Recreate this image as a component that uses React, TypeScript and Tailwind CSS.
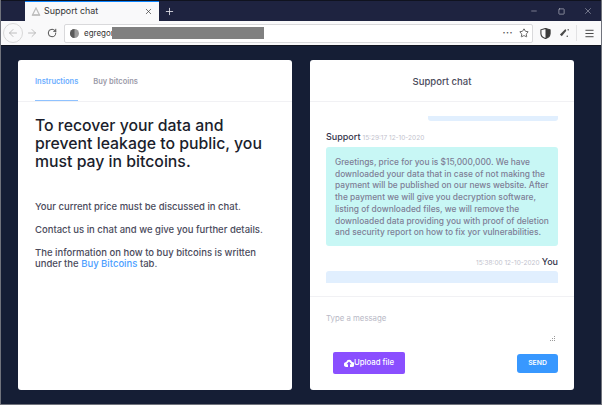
import React from "react";
import { ArrowLeft, ArrowRight, RotateCw, Star, X, Plus, Minus, Square, Menu } from "lucide-react";

const font = { sans: "font-['Inter','Liberation_Sans',sans-serif]" };

const App = () => {
  return (
    <div className={`relative w-[602px] h-[405px] flex flex-col overflow-hidden bg-[#151e35] border-x border-b border-[#70737c] ${font.sans}`}>
      {/* Tab strip */}
      <div className="h-[21px] flex items-end bg-[#1e2340] border-t border-[#10131f] shrink-0">
        <div className="ml-[24px] w-[134px] h-[20px] bg-[#f9f9fa] border-t border-t-[#0a84ff] flex items-center pl-[6px] pr-[6px]">
          <svg width="10" height="9" viewBox="0 0 10 9" className="text-[#bdbdbd] shrink-0" fill="none" stroke="currentColor" strokeWidth="1.2">
            <path d="M5 1 L8.5 8 H1.5 Z" />
            <path d="M1 8 H9" strokeWidth="1.6" />
          </svg>
          <span className="ml-[3px] text-[8.9px] text-[#333] leading-none">Support chat</span>
          <X size={9} className="ml-auto text-[#333]" strokeWidth={1.8} />
        </div>
        <div className="h-[20px] ml-[5px] flex items-center">
          <Plus size={11} className="text-[#e8e8ee]" strokeWidth={1.8} />
        </div>
        <div className="ml-auto h-[20px] flex items-center text-[#c9cbd6]">
          <Minus size={8} strokeWidth={1.6} />
          <Square size={7} className="ml-[20px]" strokeWidth={2} />
          <X size={10} className="ml-[18px] mr-[8px]" strokeWidth={1.2} />
        </div>
      </div>

      {/* Toolbar */}
      <div className="h-[25px] bg-[#f9f9fa] flex items-center shrink-0 border-b border-[#10131f]">
        <div className="ml-[2px] w-[20px] h-[20px] rounded-full border border-[#d8d8d8] flex items-center justify-center">
          <ArrowLeft size={12} className="text-[#b0b0b0]" strokeWidth={1.6} />
        </div>
        <ArrowRight size={12} className="ml-[3px] text-[#b0b0b0]" strokeWidth={1.6} />
        <RotateCw size={10} className="ml-[9px] text-[#333]" strokeWidth={2} />
        <div className="ml-[7px] w-[469px] h-[19px] bg-white border border-[#d9d9db] rounded-[2px] flex items-center pl-[4px] pr-[3px]">
          <svg width="9" height="9" viewBox="0 0 10 10" className="ml-[1px] shrink-0">
            <circle cx="5" cy="5" r="5" fill="#9a9a9a" />
            <path d="M5 0 A5 5 0 0 0 5 10 Z" fill="#5a5a5a" />
          </svg>
          <span className="ml-[5px] text-[8px] text-[#333] leading-none">egregor</span>
          <div className="-ml-[2px] w-[152px] h-[12px] bg-[#808080]" />
          <span className="ml-auto text-[#555] text-[9px] font-bold leading-none tracking-[0.5px] mb-[2px]">···</span>
          <Star size={10} className="ml-[6px] text-[#333]" strokeWidth={1.8} />
        </div>
        <svg width="11" height="11" viewBox="0 0 12 12" className="ml-[7px] shrink-0">
          <path d="M6 .5 L11 2 V6 C11 9 8.5 10.8 6 11.5 C3.5 10.8 1 9 1 6 V2 Z" fill="none" stroke="#3a3a3a" strokeWidth="1.2" />
          <path d="M6 .5 L11 2 V6 C11 9 8.5 10.8 6 11.5 Z" fill="#3a3a3a" />
        </svg>
        <svg width="11" height="11" viewBox="0 0 12 12" className="ml-[8px] shrink-0" fill="#4a4a4a">
          <path d="M7 1 L8 3 L3 9 L1 7 Z" />
          <path d="M9 2 L10 1 L11 2 L10 3 Z" />
          <circle cx="9" cy="9" r="0.8" />
        </svg>
        <div className="ml-[6px] w-px h-[16px] bg-[#e2e2e4]" />
        <Menu size={11} className="ml-[7px] text-[#3a3a3a]" strokeWidth={2} />
      </div>

      {/* Page */}
      <div className="flex gap-[18px] pl-[17px] pt-[14px]">
        {/* Left card */}
        <div className="w-[274px] h-[330px] bg-white rounded-[3px]">
          <div className="h-[42px] border-b border-b-[#f1f1f4] pl-[17px] flex gap-[15px]">
            <div className="h-[41px] border-b border-b-[#8fc2ff] pt-[17px] text-[7.5px] leading-[10px] font-semibold text-[#6aaeff]">Instructions</div>
            <div className="pt-[17px] text-[7.5px] leading-[10px] font-semibold text-[#9b9aa8]">Buy bitcoins</div>
          </div>
          <div className="pl-[17px] pr-[20px]">
            <h1 className="mt-[15px] text-[15.8px] leading-[18px] font-medium text-[#1b1e2c]">
              To recover your data and prevent leakage to public, you must pay in bitcoins.
            </h1>
            <p className="mt-[30px] text-[9.5px] leading-[11px] font-medium text-[#4b4b5c]">Your current price must be discussed in chat.</p>
            <p className="mt-[12px] text-[9.5px] leading-[11px] font-medium text-[#4b4b5c]">Contact us in chat and we give you further details.</p>
            <p className="mt-[12px] pr-[8px] text-[9.5px] leading-[11px] font-medium text-[#4b4b5c]">
              The information on how to buy bitcoins is written under the <a className="text-[#4d9fff]">Buy Bitcoins</a> tab.
            </p>
          </div>
        </div>

        {/* Right card */}
        <div className="w-[264px] h-[330px] bg-white rounded-[3px] flex flex-col">
          <div className="h-[42px] pt-[4px] border-b border-b-[#f1f1f4] flex items-center justify-center text-[9.5px] font-medium text-[#4b4b5c]">
            Support chat
          </div>
          <div className="h-[195px] border-b border-b-[#f1f1f4] pl-[16px] pr-[16px] overflow-hidden">
            <div className="ml-[102px] mt-[14px] h-[5px] bg-[#e1effe] rounded-b-[3px]" />
            <div className="mt-[10px] flex items-baseline gap-[2px]">
              <span className="text-[9px] font-medium leading-[11px] text-[#33334a]">Support</span>
              <span className="text-[6.5px] leading-[11px] text-[#c2c2cd]">15:29:17 12-10-2020</span>
            </div>
            <div className="mt-[3px] h-[99px] bg-[#c8f7f5] rounded-[3px] pl-[9px] pr-[8px] pt-[10px] text-[8.4px] leading-[11.7px] font-medium text-[#7e7e95]">
              Greetings, price for you is $15,000,000. We have downloaded your data that in case of not making the payment will be published on our news website. After the payment we will give you decryption software, listing of downloaded files, we will remove the downloaded data providing you with proof of deletion and security report on how to fix yor vulnerabilities.
            </div>
            <div className="mt-[10px] flex items-baseline justify-end gap-[2px]">
              <span className="text-[6.5px] leading-[11px] text-[#c2c2cd]">15:38:00 12-10-2020</span>
              <span className="text-[9px] font-medium leading-[11px] text-[#33334a]">You</span>
            </div>
            <div className="mt-[2px] h-[12px] bg-[#e1effe] rounded-t-[3px]" />
          </div>
          <div className="flex-1 pl-[16px] pr-[16px] flex flex-col">
            <div className="relative h-[55px] pt-[16px] text-[7.8px] leading-[10px] text-[#b9b9c6]">
              Type a message
              <svg width="6" height="6" viewBox="0 0 6 6" className="absolute right-[2px] bottom-[10px]" fill="#9a9a9a">
                <rect x="4" y="0" width="1" height="1" />
                <rect x="4" y="2" width="1" height="1" />
                <rect x="2" y="2" width="1" height="1" />
                <rect x="4" y="4" width="1" height="1" />
                <rect x="2" y="4" width="1" height="1" />
                <rect x="0" y="4" width="1" height="1" />
              </svg>
            </div>
            <div className="flex items-center justify-between pl-[7px]">
              <div className="w-[72px] h-[22px] bg-[#8a4fff] rounded-[2px] flex items-center justify-center text-white text-[7.8px] font-medium">
                <svg width="10" height="8" viewBox="0 0 20 16" className="shrink-0">
                  <path d="M5 16 A5 5 0 0 1 4.5 6 A6 6 0 0 1 16 6 A4.5 4.5 0 0 1 16 16 Z" fill="white" />
                  <path d="M10 5 L15 10.5 H12 V16 H8 V10.5 H5 Z" fill="#8a4fff" />
                </svg>
                Upload file
              </div>
              <div className="w-[41px] h-[19px] bg-[#3898ff] rounded-[3px] flex items-center justify-center text-white text-[6.8px] font-semibold">
                SEND
              </div>
            </div>
          </div>
        </div>
      </div>
      <div className="absolute bottom-[-1px] left-[127px] w-[18px] h-px bg-[#151e35]" />
    </div>
  );
};

export default App;
